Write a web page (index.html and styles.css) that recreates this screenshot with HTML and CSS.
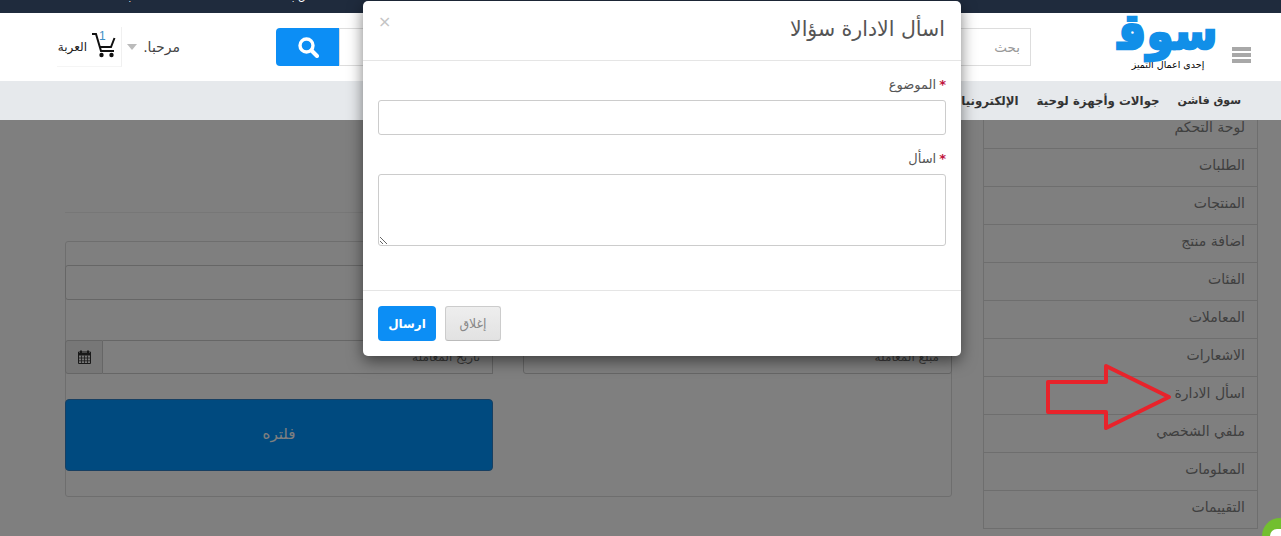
FILE: index.html
```html
<!DOCTYPE html>
<html lang="ar" dir="rtl">
<head>
    <meta charset="UTF-8">
    <meta name="viewport" content="width=device-width, initial-scale=1.0">
    <title>اسأل الادارة</title>
    <link rel="stylesheet" href="styles.css">
</head>
<body>
    <div class="page-top">
        <div class="topbar">
            <span>اتصل بنا</span>
            <span>الطلب</span>
        </div>

        <header class="site-header">
            <div class="hamburger"><i></i><i></i><i></i></div>
            <div class="logo">
                <span class="logo-name">سوق&zwj;</span>
                <span class="logo-tag">إحدى اعمال التميز</span>
            </div>
            <div class="search">
                <input class="search-input" type="text" placeholder="بحث">
                <button class="search-button" type="button">
                    <svg width="22" height="22" viewBox="0 0 22 22">
                        <circle cx="9.5" cy="9.5" r="6.5" fill="none" stroke="#fff" stroke-width="3.4"/>
                        <path d="M14.5 14.5 L20 20" stroke="#fff" stroke-width="4" stroke-linecap="round"/>
                    </svg>
                </button>
            </div>
            <div class="welcome">مرحبا.</div>
            <div class="caret"></div>
            <div class="cart">
                <div class="cart-icon">
                    <svg width="26" height="26" viewBox="0 0 26 26">
                        <path d="M1 2 H5 L10 19 H23 M23.5 6 L20 15 H8" fill="none" stroke="#111" stroke-width="2"/>
                        <circle cx="10.5" cy="23" r="2.2" fill="#111"/>
                        <circle cx="20.5" cy="23" r="2.2" fill="#111"/>
                    </svg>
                    <span class="cart-count">1</span>
                </div>
                <span>العربة</span>
            </div>
        </header>

        <nav class="main-nav">
            <a>سوق فاشن</a>
            <a>جوالات وأجهزة لوحية</a>
            <a>الإلكترونيات</a>
            <a>الأزياء</a>
        </nav>
    </div>

    <main class="content">
        <ul class="side-menu">
            <li>لوحة التحكم</li>
            <li>الطلبات</li>
            <li>المنتجات</li>
            <li>اضافة منتج</li>
            <li>الفئات</li>
            <li>المعاملات</li>
            <li>الاشعارات</li>
            <li>اسأل الادارة</li>
            <li>ملفي الشخصي</li>
            <li>المعلومات</li>
            <li>التقييمات</li>
        </ul>

        <section class="transactions">
            <div class="rule"></div>
            <form class="filter-panel">
                <input class="field" type="text">
                <div class="filter-row">
                    <input class="field field-small" type="text" placeholder="مبلغ المعاملة">
                    <div class="date-group">
                        <input class="field field-small" type="text" placeholder="تاريخ المعاملة">
                        <span class="date-addon">
                            <svg width="13" height="14" viewBox="0 0 13 14">
                                <path d="M3 0.5 V3 M10 0.5 V3" stroke="#333" stroke-width="2"/>
                                <path d="M0.5 2 H12.5 V13.5 H0.5 Z" fill="none" stroke="#333"/>
                                <path d="M0.5 3 H12.5 V5.5 H0.5 Z" fill="#333"/>
                                <path d="M0.5 8 H12.5 M0.5 10.8 H12.5 M3.5 5.5 V13.5 M6.5 5.5 V13.5 M9.5 5.5 V13.5" stroke="#333" stroke-width="0.8"/>
                            </svg>
                        </span>
                    </div>
                </div>
                <div class="filter-row filter-actions">
                    <span></span>
                    <button class="filter-button" type="button">فلتره</button>
                </div>
            </form>
        </section>
    </main>

    <!-- الخلفية الداكنة والنافذة -->
    <div class="backdrop"></div>

    <svg class="arrow" width="134" height="72" viewBox="0 0 134 72">
        <path d="M3 21 H61 V5 L124 36 L61 67 V51 H3 Z" fill="none" stroke="#e8232b" stroke-width="4" stroke-linejoin="round"/>
    </svg>

    <div class="chat-bubble"></div>

    <div class="modal">
        <div class="modal-header">
            <h4>اسأل الادارة سؤالا</h4>
            <span class="modal-close">×</span>
        </div>
        <div class="modal-body">
            <label class="modal-label"><b>*</b>الموضوع</label>
            <input class="modal-input" type="text">
            <label class="modal-label modal-label-second"><b>*</b>اسأل</label>
            <textarea class="modal-textarea"></textarea>
        </div>
        <div class="modal-footer">
            <button class="btn-close" type="button">إغلاق</button>
            <button class="btn-send" type="button">ارسال</button>
        </div>
    </div>
</body>
</html>
```

FILE: styles.css
```css
* {
    box-sizing: border-box;
}
html {
    height: 536px;
    overflow: hidden;
}
body {
    position: relative;
    margin: 0;
    height: 536px;
    overflow: hidden;
    background: #fff;
    color: #333;
    font-family: "DejaVu Sans", "Liberation Sans", sans-serif;
    font-size: 13px;
}
input, textarea, button {
    font-family: inherit;
}

/* header */
.page-top {
    position: relative;
    z-index: 20;
}
.topbar {
    height: 13px;
    overflow: hidden;
    background: #1f2b3d;
    color: #fff;
    font-size: 11px;
    line-height: 1;
    display: flex;
    gap: 130px;
    padding-left: 125px;
    justify-content: flex-end;
}
.topbar span {
    margin-top: -9px;
}
.site-header {
    height: 68px;
    background: #fff;
    display: flex;
    align-items: flex-start;
    padding-right: 30px;
}
.hamburger {
    width: 19px;
    margin-top: 34px;
    display: flex;
    flex-direction: column;
    gap: 2px;
}
.hamburger i {
    display: block;
    height: 4px;
    background: #a8a8a8;
}
.logo {
    width: 102px;
    margin-right: 13px;
    display: flex;
    flex-direction: column;
    align-items: center;
}
.logo-name {
    color: #118fe8;
    font-size: 42px;
    font-weight: bold;
    line-height: 44px;
    height: 45px;
    -webkit-text-stroke: 2px #118fe8;
    transform: scale(1.05, 1.2);
    transform-origin: 50% 75%;
}
.logo-tag {
    color: #000;
    font-size: 9.5px;
    line-height: 14px;
    white-space: nowrap;
}
.search {
    display: flex;
    margin-right: 86px;
    margin-top: 15px;
    height: 38px;
}
.search-input {
    width: 692px;
    height: 38px;
    border: 1px solid #ddd;
    padding: 0 10px;
    font-size: 13.5px;
    outline: none;
}
.search-input::placeholder {
    color: #999;
}
.search-button {
    width: 63px;
    height: 38px;
    border: 0;
    border-radius: 4px 0 0 4px;
    background: #0c8ef5;
    display: flex;
    align-items: center;
    justify-content: center;
    padding: 0;
}
.welcome {
    margin-right: 96px;
    margin-top: 26px;
    width: 37px;
    font-size: 14px;
    color: #444;
    white-space: nowrap;
}
.caret {
    margin-right: 6px;
    margin-top: 31px;
    width: 0;
    height: 0;
    border-left: 5px solid transparent;
    border-right: 5px solid transparent;
    border-top: 6px solid #bbb;
}
.cart {
    margin-right: 5px;
    margin-top: 14px;
    width: 65px;
    height: 40px;
    border-right: 1px solid #f0f0f0;
    border-bottom: 1px solid #f5f5f5;
    display: flex;
    align-items: center;
    gap: 4px;
    padding-right: 4px;
    font-size: 12px;
    white-space: nowrap;
    color: #222;
}
.cart-icon {
    position: relative;
    height: 26px;
    margin-top: -4px;
}
.cart-count {
    position: absolute;
    top: -3px;
    left: 8px;
    color: #3b8ec4;
    font-size: 12px;
    font-family: "Liberation Sans", sans-serif;
}
.main-nav {
    height: 39px;
    background: #e6e9ec;
    display: flex;
    align-items: center;
    gap: 18px;
    padding-right: 40px;
    overflow: hidden;
    font-size: 11.8px;
    font-weight: bold;
    color: #333;
    white-space: nowrap;
}
.main-nav a:first-child {
    font-size: 11px;
}

/* page content under the backdrop */
.content {
    margin-top: -10px;
    display: flex;
    gap: 31px;
    padding-right: 23px;
}
.side-menu {
    list-style: none;
    margin: 0;
    padding: 0;
    width: 275px;
    height: 419px;
    border: 1px solid #ddd;
    flex-shrink: 0;
}
.side-menu li {
    height: 38px;
    border-bottom: 1px solid #ddd;
    padding-right: 12px;
    line-height: 33px;
    font-size: 14px;
    color: #808080;
}
.side-menu li:last-child {
    border-bottom: 0;
}
.transactions {
    width: 887px;
}
.rule {
    height: 1px;
    margin-top: 102px;
    background: #eee;
}
.filter-panel {
    margin-top: 28px;
    height: 256px;
    border: 1px solid #ddd;
    border-radius: 3px;
    padding-top: 23px;
}
.field {
    display: block;
    width: calc(100% + 2px);
    height: 35px;
    border: 1px solid #ccc;
    border-radius: 3px;
    background: #fff;
    padding: 0 12px;
    font-size: 12px;
    margin: 0 -1px;
    outline: none;
}
.field-small {
    width: 100%;
    height: 34px;
    margin: 0;
}
.filter-row {
    display: grid;
    grid-template-columns: 429px 428px;
    gap: 30px;
    margin-top: 40px;
    margin-right: -1px;
    margin-left: -1px;
}
.date-group {
    display: flex;
}
.date-group .field {
    border-left: 0;
    border-radius: 0;
}
.date-addon {
    width: 38px;
    height: 34px;
    flex-shrink: 0;
    background: #eee;
    border: 1px solid #ccc;
    border-radius: 3px 0 0 3px;
    display: flex;
    align-items: center;
    justify-content: center;
}
.filter-actions {
    margin-top: 25px;
}
.filter-button {
    height: 72px;
    padding-bottom: 4px;
    border: 1px solid #2e7fc4;
    border-radius: 4px;
    background: #0095ff;
    color: #fff;
    font-size: 15px;
}

/* overlay things */
.backdrop {
    position: absolute;
    top: 120px;
    left: 0;
    right: 0;
    bottom: 0;
    z-index: 10;
    background: rgba(0, 0, 0, 0.5);
}
.arrow {
    position: absolute;
    left: 1045px;
    top: 361px;
    z-index: 11;
}
.chat-bubble {
    position: absolute;
    right: 0;
    bottom: 0;
    width: 19px;
    height: 18px;
    overflow: hidden;
    border-top-left-radius: 19px;
    background: #72bf2f;
    z-index: 11;
}
.chat-bubble::after {
    content: "";
    position: absolute;
    left: 8px;
    top: 11px;
    width: 11px;
    height: 7px;
    border-top-left-radius: 11px;
    background: #fff;
}
.modal {
    position: absolute;
    left: 363px;
    top: 1px;
    width: 598px;
    height: 355px;
    z-index: 30;
    background: #fff;
    border-radius: 5px;
    box-shadow: 0 5px 15px rgba(0, 0, 0, 0.5);
    display: flex;
    flex-direction: column;
}
.modal-header {
    height: 60px;
    border-bottom: 1px solid #e5e5e5;
    padding: 0 16px 0 15px;
    display: flex;
    justify-content: space-between;
}
.modal-header h4 {
    margin: 13px 0 0;
    font-size: 20.5px;
    font-weight: normal;
    line-height: 30px;
    color: #555;
}
.modal-close {
    margin-top: 11px;
    font-size: 16px;
    line-height: 20px;
    color: #c4c4c4;
}
.modal-body {
    height: 230px;
    padding: 0 15px;
    border-bottom: 1px solid #e5e5e5;
}
.modal-label {
    display: block;
    margin-top: 15px;
    height: 24px;
    font-size: 13px;
    line-height: 18px;
    color: #555;
}
.modal-label b {
    margin-left: 3px;
    color: #c0143c;
}
.modal-label-second {
    margin-top: 15px;
}
.modal-input, .modal-textarea {
    display: block;
    width: 100%;
    border: 1px solid #ccc;
    border-radius: 3px;
    outline: none;
    background: #fff;
}
.modal-input {
    height: 35px;
}
.modal-textarea {
    height: 72px;
}
.modal-footer {
    flex: 1;
    padding: 15px 15px 0;
    display: flex;
    justify-content: flex-end;
    align-items: flex-start;
    gap: 9px;
}
.btn-send {
    width: 58px;
    height: 35px;
    border: 0;
    border-radius: 4px;
    background: #0c8ef5;
    color: #fff;
    font-size: 12px;
    font-weight: bold;
}
.btn-close {
    width: 56px;
    height: 35px;
    border: 1px solid #ccc;
    border-bottom-color: #bbb;
    border-radius: 3px;
    background: linear-gradient(#eee, #e2e2e2);
    color: #888;
    font-size: 12.5px;
}
```
